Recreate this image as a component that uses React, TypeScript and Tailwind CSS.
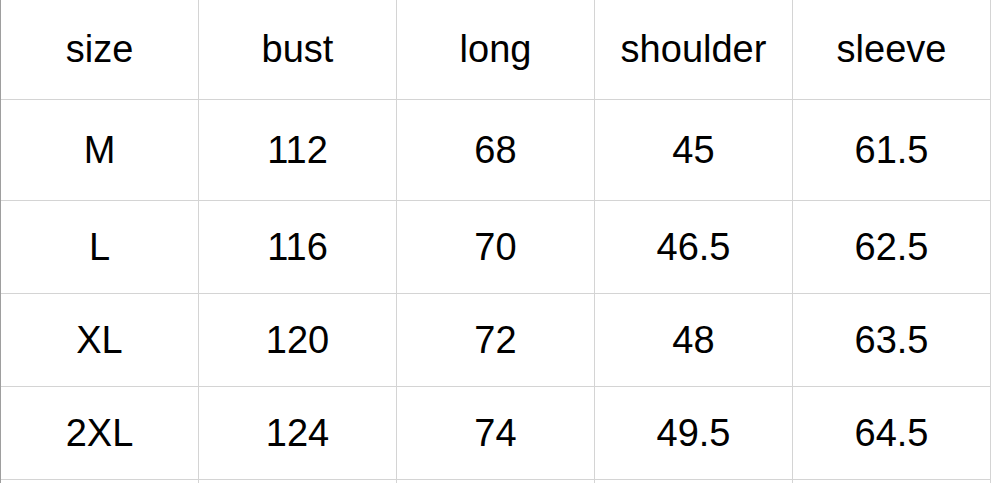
const headers = ['size', 'bust', 'long', 'shoulder', 'sleeve'];

const rows = [
  { h: 'h-[101px]', cells: ['M', '112', '68', '45', '61.5'] },
  { h: 'h-[93px]', cells: ['L', '116', '70', '46.5', '62.5'] },
  { h: 'h-[93px]', cells: ['XL', '120', '72', '48', '63.5'] },
  { h: 'h-[93px]', cells: ['2XL', '124', '74', '49.5', '64.5'] },
];

function Cell({ text, h }: { text: string; h: string }) {
  return (
    <div className={`${h} w-[198px] flex items-center justify-center border-r border-b border-[#d4d4d4] text-[38px] text-black`}>
      {text}
    </div>
  );
}

export default function App() {
  return (
    <div className="w-[993px] h-[483px] overflow-hidden bg-white" style={{ fontFamily: '"Liberation Sans", Arial, sans-serif' }}>
      <div className="border-l border-[#9e9e9e] w-fit">
        {/* header */}
        <div className="flex">
          {headers.map((t) => (
            <Cell key={t} text={t} h="h-[100px]" />
          ))}
        </div>

        {rows.map((r, i) => (
          <div key={i} className="flex">
            {r.cells.map((t, j) => (
              <Cell key={j} text={t} h={r.h} />
            ))}
          </div>
        ))}

        {/* next row, cut off */}
        <div className="flex">
          {headers.map((t) => (
            <Cell key={t} text="" h="h-[93px]" />
          ))}
        </div>
      </div>
    </div>
  );
}
